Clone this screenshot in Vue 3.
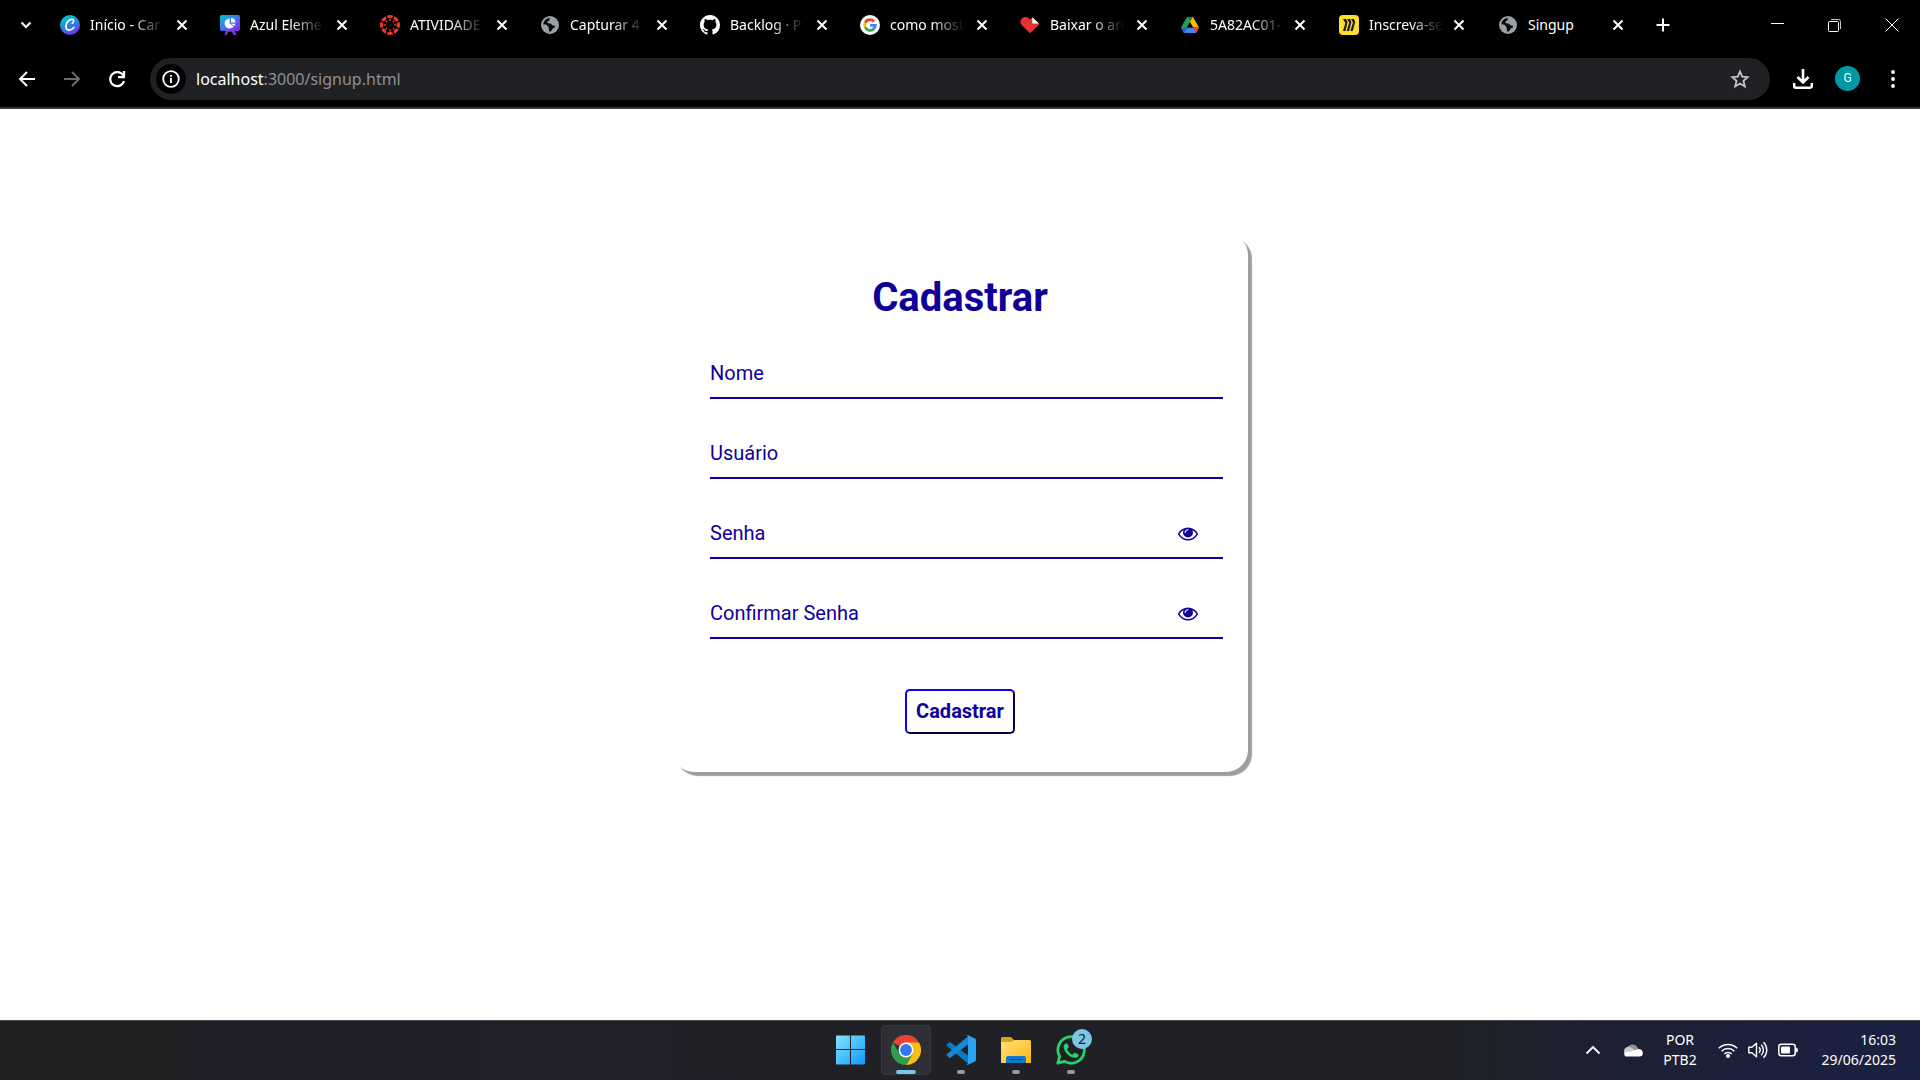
<script setup>
import { reactive } from 'vue'

const tabs = [
  { icon: 'canva', title: 'Início - Car' },
  { icon: 'slides', title: 'Azul Eleme' },
  { icon: 'canvas', title: 'ATIVIDADE' },
  { icon: 'globe', title: 'Capturar 4' },
  { icon: 'github', title: 'Backlog · P' },
  { icon: 'google', title: 'como most' },
  { icon: 'heart', title: 'Baixar o arq' },
  { icon: 'drive', title: '5A82AC01-' },
  { icon: 'miro', title: 'Inscreva-se' },
  { icon: 'globe', title: 'Singup' },
]

const fields = reactive([
  { id: 'nome', label: 'Nome', secret: false, visible: true, value: '' },
  { id: 'usuario', label: 'Usuário', secret: false, visible: true, value: '' },
  { id: 'senha', label: 'Senha', secret: true, visible: false, value: '' },
  { id: 'confirmar', label: 'Confirmar Senha', secret: true, visible: false, value: '' },
])
</script>

<template>
  <div class="screen">
    <header class="browser">
      <div class="strip">
        <button class="tool" aria-label="Pesquisar guias">
          <svg width="20" height="20" viewBox="0 0 20 20"><path d="M5.500 7.500l4.500 4.500 4.500-4.500" fill="none" stroke="#fff" stroke-width="2.200" /></svg>
        </button>
        <div class="tabs">
          <div v-for="(tab, i) in tabs" :key="i" class="tab">
            <svg v-if="tab.icon === 'canva'" class="favicon" viewBox="0 0 20 20">
              <defs>
                <linearGradient id="canvaFill" x1="0.2" y1="0" x2="0.7" y2="1"><stop offset="0.1" stop-color="#00c4cc" /><stop offset="0.55" stop-color="#2d7fe0" /><stop offset="1" stop-color="#7d2ae8" /></linearGradient>
              </defs>
              <circle cx="10" cy="10" r="10" fill="url(#canvaFill)" />
              <path d="M12.300 8.200c1.300-.4 2-3.200.3-3.800C9.600 3.600 5.800 7.600 5.900 11.600c.1 4.400 4.800 4.900 7.900.8" fill="none" stroke="#fff" stroke-width="1.700" stroke-linecap="round" />
            </svg>
            <svg v-else-if="tab.icon === 'slides'" class="favicon" viewBox="0 0 20 20">
              <defs>
                <linearGradient id="slideFill" x1="0" y1="0" x2="0.7" y2="1"><stop offset="0.05" stop-color="#00c4cc" /><stop offset="0.55" stop-color="#4a6cf0" /><stop offset="1" stop-color="#8b1fe0" /></linearGradient>
              </defs>
              <path d="M2 0h16a2 2 0 0 1 2 2v12a2 2 0 0 1-2 2h-3l1.500 4h-3.200L12 16.800H8L6.700 20H4.500L6 16H2a2 2 0 0 1-2-2V2a2 2 0 0 1 2-2z" fill="url(#slideFill)" />
              <path d="M9.600 3.500v5l4 3A5 5 0 1 1 9.600 3.500z" fill="#fff" /><path d="M11 2.700a4.700 4.700 0 0 1 4.600 4.800H11z" fill="#fff" /><path d="M11 8.700h4.400a5 5 0 0 1-1.200 2.300z" fill="#fff" />
            </svg>
            <svg v-else-if="tab.icon === 'canvas'" class="favicon" viewBox="0 0 20 20">
              <g v-for="a in 8" :key="a" :transform="`rotate(${a * 45} 10 10)`" fill="#e53a2b">
                <path d="M7 .5a10 10 0 0 1 6 0A3 3 0 0 1 7 .5z" /><circle cx="10" cy="5" r="0.900" />
              </g>
            </svg>
            <svg v-else-if="tab.icon === 'globe'" class="favicon" viewBox="0 0 20 20">
              <circle cx="10" cy="10" r="9" fill="#9aa0a6" />
              <path d="M10.500 2.900c-1 .5-1.400 1.400-1 2.200.2.500-.8.900-1.500 1.100-.8.300-.8 1.300-.3 1.900.6.700 2.200.2 3 .5 1.100.4.800 1.700 2 1.900.8.200 2-.1 2.300.7.300.9-.7 1.800-1.700 2-1 .3-1.200 1.700-2.100 2.700-.5.500-1.500.8-2.300.7l.1-2c-.2-.8-1.400-.8-1.700-1.700-.3-.8.300-1.400.1-2-.4-1-2.200-1.500-4.200-1.300A7 7 0 0 1 10.500 2.900z" fill="#08090a" />
              <path d="M3.500 9.600c1.500-.1 4.200 1.600 5.200 2.500v3.600c-2.700-.6-5-3-5.200-6.100z" fill="#9aa0a6" />
              <path d="M12 5.500c1-.3 1.200-1.300 1.600-1.800 1.600 1 2.700 2.700 3 4.600-1.200-.2-2.200.2-3-.5-.6-.6-1.900-.9-1.600-2.300z" fill="#9aa0a6" />
            </svg>
            <svg v-else-if="tab.icon === 'github'" class="favicon" viewBox="0 0 16 16">
              <path fill="#fff" d="M8 0C3.580 0 0 3.580 0 8c0 3.540 2.290 6.530 5.470 7.590.4.070.55-.17.55-.38 0-.19-.01-.82-.01-1.490-2.010.37-2.530-.49-2.690-.94-.09-.23-.48-.94-.82-1.130-.28-.15-.68-.52-.01-.53.63-.01 1.080.58 1.230.82.72 1.210 1.870.87 2.330.66.07-.52.28-.87.51-1.070-1.780-.2-3.640-.89-3.640-3.950 0-.87.31-1.590.82-2.150-.08-.2-.36-1.020.08-2.120 0 0 .67-.21 2.200.82.64-.18 1.320-.27 2-.27s1.360.09 2 .27c1.530-1.040 2.200-.82 2.200-.82.44 1.100.16 1.920.08 2.120.51.56.82 1.270.82 2.150 0 3.070-1.870 3.750-3.650 3.950.29.25.54.73.54 1.480 0 1.070-.01 1.930-.01 2.200 0 .21.15.46.55.38A8.010 8.010 0 0 0 16 8c0-4.420-3.580-8-8-8z" />
            </svg>
            <svg v-else-if="tab.icon === 'google'" class="favicon" viewBox="0 0 20 20">
              <circle cx="10" cy="10" r="10" fill="#fff" />
              <g fill="none" stroke-width="2.800">
                <path d="M5.300 7.600A5.200 5.200 0 0 1 14 6.600" stroke="#ea4335" /><path d="M5.300 12.400a5.200 5.200 0 0 1 0-4.900" stroke="#fbbc05" />
                <path d="M13.400 14.100a5.200 5.200 0 0 1-8.200-1.800" stroke="#34a853" /><path d="M10.200 10.400h5.200a5.200 5.200 0 0 1-2.100 3.900" stroke="#4285f4" />
              </g>
            </svg>
            <svg v-else-if="tab.icon === 'heart'" class="favicon" viewBox="0 0 20 20">
              <path d="M10 18.300L1.800 10.200C-1 6.800 1 2 5.200 1.900c2.200 0 3.900 1.100 4.800 2.700.5-.9 1.300-1.500 2.300-1.900l7 6.300q-.3.600-.9 1.200z" fill="#e5322d" />
              <path d="M12.300 2.200l6.700 6.300h-6.700z" fill="#fff" />
            </svg>
            <svg v-else-if="tab.icon === 'drive'" class="favicon" viewBox="0 0 20 20">
              <path d="M7 2h6L4 18 1 12.500z" fill="#22a04c" /><path d="M7 2h6l6 10.500h-6z" fill="#fbbc04" />
              <path d="M7.200 2h5.600L10 7z" fill="#188038" /><path d="M4 18l3-5.500h12L16 18z" fill="#4285f4" /><path d="M1 12.500h6L4 18z" fill="#1967d2" /><path d="M13 12.500h6L16 18z" fill="#ea4335" />
              <path d="M10 7.200l3.100 5.300H6.900z" fill="#000" />
            </svg>
            <svg v-else class="favicon" viewBox="0 0 20 20">
              <rect width="20" height="20" rx="4" fill="#ffdd33" />
              <path d="M4 4h3l1.600 3L6.500 16H4l2.300-8zM8 4h3l1.400 3L10 16H7.700l2.500-8.500zM12 4h3l1.200 3L13.700 16h-2.400l2.600-8.500z" fill="#1c1c1e" />
            </svg>
            <span class="title">{{ tab.title }}</span>
            <button class="close" :aria-label="'Fechar ' + tab.title">
              <svg width="12" height="12" viewBox="0 0 12 12"><path d="M1.500 1.500l9 9m0-9l-9 9" stroke="#fff" stroke-width="2" /></svg>
            </button>
          </div>
          <button class="new" aria-label="Nova guia">
            <svg width="14" height="14" viewBox="0 0 14 14"><path d="M7 .5v13M.5 7h13" stroke="#fff" stroke-width="2" /></svg>
          </button>
        </div>
        <div class="window">
          <button aria-label="Minimizar"><svg width="14" height="14" viewBox="0 0 14 14"><path d="M0 5.500h13" stroke="#fff" /></svg></button>
          <button aria-label="Restaurar"><svg width="14" height="14" viewBox="0 0 14 14"><rect x="0.500" y="3.500" width="10" height="10" rx="1" fill="none" stroke="#fff" /><path d="M3 1.500h7.500a2 2 0 0 1 2 2V11" fill="none" stroke="#ccc" /></svg></button>
          <button aria-label="Fechar"><svg width="14" height="14" viewBox="0 0 14 14"><path d="M.5.500l13 13m0-13l-13 13" stroke="#fff" /></svg></button>
        </div>
      </div>

      <div class="toolbar">
        <button class="tool" aria-label="Voltar"><svg width="18" height="18" viewBox="0 0 18 18"><path d="M17 9H2.500M9 2L2 9l7 7" fill="none" stroke="#fff" stroke-width="2" /></svg></button>
        <button class="tool" aria-label="Avançar"><svg width="18" height="18" viewBox="0 0 18 18"><path d="M1 9h14.500M9 2l7 7-7 7" fill="none" stroke="#6b6b6b" stroke-width="2" /></svg></button>
        <button class="tool" aria-label="Recarregar"><svg width="18" height="18" viewBox="0 0 18 18"><path d="M15.200 5.500A7 7 0 1 0 16 11" fill="none" stroke="#fff" stroke-width="2.200" /><path d="M10 7.200h6V1" fill="none" stroke="#fff" stroke-width="2.200" /></svg></button>
        <div class="omnibox">
          <button class="info" aria-label="Informações do site"><svg width="18" height="18" viewBox="0 0 18 18"><circle cx="9" cy="9" r="7.800" fill="none" stroke="#fff" stroke-width="1.800" /><path d="M9 8v5M9 5v1.800" stroke="#fff" stroke-width="1.900" /></svg></button>
          <span class="url"><b>localhost</b>:3000/signup.html</span>
          <button class="star" aria-label="Adicionar aos favoritos"><svg width="20" height="20" viewBox="0 0 20 20"><path d="M10 2.500l2.200 5.200 5.500.5-4.200 3.700 1.300 5.500L10 14.500l-4.800 2.900 1.300-5.500-4.200-3.700 5.500-.5z" fill="none" stroke="#c7c7c7" stroke-width="1.800" /></svg></button>
        </div>
        <button class="tool" aria-label="Downloads"><svg width="20" height="20" viewBox="0 0 20 20"><path d="M10 0v13M4.500 8l5.500 5.500L15.500 8" fill="none" stroke="#fff" stroke-width="2.600" /><path d="M1.200 14v3.200a1.500 1.500 0 0 0 1.500 1.500h14.600a1.500 1.500 0 0 0 1.500-1.500V14" fill="none" stroke="#fff" stroke-width="2.400" /></svg></button>
        <button class="tool" aria-label="Perfil"><span class="avatar">G</span></button>
        <button class="tool" aria-label="Menu"><svg width="18" height="18" viewBox="0 0 18 18" fill="#fff"><circle cx="9" cy="2" r="1.900" /><circle cx="9" cy="9" r="1.900" /><circle cx="9" cy="16" r="1.900" /></svg></button>
      </div>
    </header>

    <main class="page">
      <form class="card" @submit.prevent>
        <h1>Cadastrar</h1>
        <div v-for="field in fields" :key="field.id" class="field">
          <input :id="field.id" v-model="field.value" :type="field.visible ? 'text' : 'password'" />
          <label v-show="!field.value" :for="field.id">{{ field.label }}</label>
          <button v-if="field.secret" type="button" class="eye" :aria-label="'Mostrar ' + field.label" @click="field.visible = !field.visible">
            <svg width="20" height="20" viewBox="0 64 1792 1792"><path fill="currentColor" d="M1664 960q-152-236-381-353 61 104 61 225 0 185-131.500 316.500t-316.500 131.500-316.500-131.500-131.500-316.500q0-121 61-225-229 117-381 353 133 205 333.500 326.500t434.500 121.500 434.500-121.500 333.500-326.500zm-720-384q0-20-14-34t-34-14q-125 0-214.500 89.500t-89.500 214.500q0 20 14 34t34 14 34-14 14-34q0-86 61-147t147-61q20 0 34-14t14-34zm848 384q0 34-20 69-140 230-376.500 368.500t-499.500 138.500-499.500-139-376.500-368q-20-35-20-69t20-69q140-229 376.500-368t499.500-139 499.500 139 376.500 368q20 35 20 69z" /></svg>
          </button>
        </div>
        <button class="submit">Cadastrar</button>
      </form>
    </main>

    <footer class="taskbar">
      <nav class="apps">
        <button aria-label="Iniciar">
          <svg width="30" height="30" viewBox="0 0 30 30">
            <defs><linearGradient id="winFill" x1="0" y1="0" x2="30" y2="30" gradientUnits="userSpaceOnUse"><stop offset="0" stop-color="#8be3ff" /><stop offset="0.5" stop-color="#45c0fb" /><stop offset="1" stop-color="#0f92f5" /></linearGradient></defs>
            <path d="M1 .5H14V14H0V1.500a1 1 0 0 1 1-1zM15 .5h13a1 1 0 0 1 1 1V14H15zM0 15H14v14.500H1a1 1 0 0 1-1-1zM15 15h14v13.500a1 1 0 0 1-1 1H15z" fill="url(#winFill)" />
          </svg>
        </button>
        <button class="active" aria-label="Google Chrome">
          <svg width="30" height="30" viewBox="0 0 30 30">
            <path d="M15 15L2 7.500A15 15 0 0 1 28 7.500z" fill="#ea4335" /><path d="M15 7.500h13A15 15 0 0 1 15 30l6.500-11z" fill="#fbbc15" /><path d="M2 7.500l6.500 11.300L21.500 19 15 30A15 15 0 0 1 2 7.500z" fill="#2f9e4f" />
            <circle cx="15" cy="15" r="7.500" fill="#fff" /><circle cx="15" cy="15" r="5.900" fill="#3079ee" />
          </svg>
          <i></i>
        </button>
        <button aria-label="Visual Studio Code">
          <svg width="30" height="30" viewBox="0 0 30 30">
            <path d="M1 9.200L3 7.400q.8-.6 1.700 0L23 21.300V29.500L1 11q-.8-.9 0-1.800z" fill="#0f78c2" /><path d="M1 20.800l2 1.800q.8.600 1.700 0L23 8.700V.5L1 19q-.8.900 0 1.800z" fill="#1688d4" />
            <path d="M22 .2l7 3.300q1 .5 1 1.700v19.600q0 1.200-1 1.700l-7 3.300q-1.200.5-2-.5 2 .8 2-1.300V2q0-2.100-2-1.300 1-1 2-.5z" fill="#2aa3f2" />
          </svg>
          <i></i>
        </button>
        <button aria-label="Explorador de Arquivos">
          <svg width="30" height="30" viewBox="0 0 30 30">
            <defs><linearGradient id="folderFill" x1="0" y1="0" x2="1" y2="1"><stop offset="0" stop-color="#ffe07a" /><stop offset="1" stop-color="#fdb813" /></linearGradient></defs>
            <path d="M0 3.500A1.500 1.500 0 0 1 1.500 2H10l3 3v3H0z" fill="#e0a010" /><path d="M0 7h10.500l3-2h15A1.500 1.500 0 0 1 30 6.500V28H0z" fill="url(#folderFill)" />
            <path d="M5 28v-5a2 2 0 0 1 2-2h16a2 2 0 0 1 2 2v5z" fill="#1179cc" /><path d="M8.500 24.500h13" stroke="#0a4f90" />
          </svg>
          <i></i>
        </button>
        <button aria-label="WhatsApp">
          <svg width="30" height="30" viewBox="0 0 30 30">
            <path d="M1.800 28.200l1.900-6.700A13.200 13.200 0 1 1 8.600 26.400z" fill="none" stroke="#25d366" stroke-width="2.800" stroke-linejoin="round" />
            <path transform="translate(5.500 5.500) scale(.82)" d="M6.620 10.790c1.440 2.830 3.760 5.140 6.590 6.590l2.200-2.200c.27-.27.67-.36 1.020-.24l3.700 1.700c.55.200.9.700.8 1.300-.4 2.400-2.500 3.200-4.500 3.100C9.500 20.500 3 13.800 2.700 7.500c0-2 1.100-4 3.300-4.200.7 0 1 .3 1.300.9l1.500 3.370c.11.350.03.740-.25 1.020z" fill="#25d366" />
          </svg>
          <i></i><span class="badge">2</span>
        </button>
      </nav>
      <div class="tray">
        <button class="up" aria-label="Ícones ocultos"><svg width="16" height="10" viewBox="0 0 16 10"><path d="M1.500 8.500L8 2l6.500 6.500" fill="none" stroke="#fff" stroke-width="1.800" /></svg></button>
        <svg width="20" height="14" viewBox="0 0 20 14"><path d="M4 9a5.500 5.500 0 0 1 11-3.500l1.500 4z" fill="#8d9096" /><path d="M1 8.500A4.500 4.500 0 0 1 8 4.500l9 6-14 2z" fill="#c9cacd" /><path d="M2.500 13.500A3 3 0 0 1 2 9l6-.500 6.500-2.300a4 4 0 0 1 5.300 4.200q0 3-3.300 3.100z" fill="#fff" /></svg>
        <div class="lang">POR<br />PTB2</div>
        <div class="status">
          <svg width="20" height="16" viewBox="0 0 20 16"><g fill="none" stroke="#fff" stroke-width="1.500"><path d="M.8 6.300a13 13 0 0 1 18.400 0" /><path d="M3.600 9.200a9 9 0 0 1 12.800 0" /><path d="M6.300 12a5.200 5.200 0 0 1 7.400 0" /></g><circle cx="10" cy="14" r="2" fill="#fff" /></svg>
          <svg width="20" height="18" viewBox="0 0 20 18"><g fill="none" stroke="#fff" stroke-width="1.400"><path d="M.8 6.300v5.400h3l4.700 4V2.300l-4.700 4z" stroke-linejoin="round" /><path d="M11 6.300a4 4 0 0 1 0 5.400M13.200 3.700a7.500 7.500 0 0 1 0 10.600M15.500 1.200a11 11 0 0 1 0 15.600" /></g></svg>
          <svg width="20" height="14" viewBox="0 0 20 14"><rect x="0.800" y="1.200" width="16.400" height="11.600" rx="2.500" fill="none" stroke="#fff" stroke-width="1.500" /><rect x="3" y="3.500" width="9" height="7" rx="1" fill="#fff" /><path d="M18 4.500q2 0 2 2.500t-2 2.500z" fill="#fff" /></svg>
        </div>
        <div class="clock">16:03<br />29/06/2025</div>
      </div>
    </footer>
  </div>
</template>

<style>
body {
  margin: 0;
}
</style>

<style scoped>
.screen {
  --ink: #0f009a;
  min-height: 100vh;
  display: flex;
  flex-direction: column;
  background: #fff;
  font-family: "Noto Sans", "Open Sans", sans-serif;
}
button {
  padding: 0;
  border: 0;
  background: none;
  color: inherit;
  font: inherit;
}
svg {
  display: block;
  flex: none;
}
.browser {
  background: #000;
  color: #fff;
  border-bottom: 2px solid #3b3839;
}
.strip {
  display: flex;
  align-items: center;
  height: 50px;
  padding-left: 3px;
}
.tool {
  display: grid;
  place-items: center;
  flex: none;
  width: 45px;
  height: 40px;
}
.tabs {
  display: flex;
  flex: 1;
  min-width: 0;
  padding-left: 2px;
}
.tab {
  display: flex;
  align-items: center;
  box-sizing: border-box;
  width: 160px;
  min-width: 0;
  padding-left: 10px;
}
.tab:nth-child(n + 8) {
  width: 159px;
}
.favicon {
  width: 20px;
  height: 20px;
}
.title {
  width: 74px;
  margin: 0 12px 0 10px;
  overflow: hidden;
  white-space: nowrap;
  font-size: 14px;
  line-height: 20px;
  mask-image: linear-gradient(to right, #000 55%, transparent);
}
.tab:nth-child(n + 8) .title {
  margin-right: 10px;
}
.tab:nth-child(10) .title {
  mask-image: none;
}
.close,
.new {
  display: grid;
  place-items: center;
  height: 20px;
}
.new {
  width: 32px;
}
.window {
  display: flex;
}
.window button {
  display: grid;
  place-items: center;
  width: 57px;
  height: 40px;
}
.toolbar {
  display: flex;
  align-items: center;
  height: 57px;
  padding: 0 5px 0 4px;
}
.omnibox {
  display: flex;
  flex: 1;
  align-items: center;
  height: 42px;
  margin: 0 10px 0 11px;
  border-radius: 21px;
  background: #202124;
}
.info {
  display: grid;
  place-items: center;
  width: 30px;
  height: 30px;
  margin-left: 6px;
  border-radius: 50%;
  background: #000;
}
.url {
  flex: 1;
  margin-left: 10px;
  color: #8f9094;
  font-size: 16px;
}
.url b {
  color: #fff;
  font-weight: 400;
}
.star {
  margin-right: 20px;
}
.avatar {
  width: 25px;
  height: 25px;
  border-radius: 50%;
  background: #0097a7;
  font-family: Roboto, sans-serif;
  font-size: 12px;
  line-height: 25px;
  text-align: center;
}
.page {
  flex: 1;
  font-family: Roboto, sans-serif;
  color: var(--ink);
}
.card {
  display: flex;
  flex-direction: column;
  box-sizing: border-box;
  width: 30%;
  margin: 124px auto 0;
  padding: 41px 25px 38px 38px;
  border-radius: 22px;
  box-shadow: 4px 4px 1px #9e9e9e;
  background: #fff;
}
h1 {
  margin: 0 13px 31px 0;
  font-size: 40px;
  line-height: 48px;
  text-align: center;
}
.field {
  display: grid;
  align-items: center;
  height: 46px;
  margin-bottom: 34px;
  border-bottom: 2px solid var(--ink);
  box-sizing: border-box;
}
.field > * {
  grid-area: 1 / 1;
}
.field input {
  width: 100%;
  height: 40px;
  padding: 0;
  border: 0;
  outline: 0;
  background: none;
  color: var(--ink);
  font: 20px Roboto, sans-serif;
}
.field label {
  justify-self: start;
  padding-bottom: 4px;
  font-size: 20px;
  line-height: 24px;
  pointer-events: none;
}
.eye {
  justify-self: end;
  margin: 0 25px 2px 0;
}
.submit {
  align-self: center;
  box-sizing: border-box;
  width: 110px;
  height: 45px;
  margin: 16px 13px 0 0;
  padding-bottom: 1px;
  border: 2px solid;
  border-color: #1400f0 #07004c #07004c #1400f0;
  border-radius: 5px;
  font-size: 20px;
  font-weight: 700;
}
.taskbar {
  display: grid;
  grid-template-columns: 1fr auto 1fr;
  align-items: center;
  box-sizing: border-box;
  height: 60px;
  padding-bottom: 1px;
  border-top: 1px solid #45474b;
  background: linear-gradient(to right, #20201f 0, #20201f 8%, #20202a 11%, #20202a 25%, #202126 45%, #202126 75%, #1b2038 88%, #1a2142);
  color: #fff;
}
.apps {
  grid-column: 2;
  display: flex;
  gap: 5px;
  padding-left: 2px;
}
.apps button {
  position: relative;
  display: grid;
  place-items: center;
  width: 50px;
  height: 50px;
  border-radius: 5px;
}
.apps .active {
  background: #2e2f34;
  box-shadow: inset 0 0 0 1px #37383c;
}
.apps i {
  position: absolute;
  bottom: 1px;
  left: 21px;
  width: 8px;
  height: 4px;
  border-radius: 2px;
  background: #9a9a9d;
}
.apps .active i {
  left: 15px;
  width: 20px;
  background: #7cc5e6;
}
.badge {
  position: absolute;
  top: 4px;
  right: 4px;
  width: 20px;
  height: 20px;
  border-radius: 50%;
  background: #7cc5e6;
  color: #10212b;
  font-size: 14px;
  line-height: 20px;
}
.tray {
  display: flex;
  align-items: center;
  justify-content: flex-end;
  padding-right: 24px;
  font-size: 14px;
  line-height: 20px;
}
.up {
  margin-right: 22px;
}
.lang {
  width: 34px;
  margin: 0 21px 0 20px;
  text-align: center;
}
.status {
  display: flex;
  align-items: center;
  gap: 10px;
}
.clock {
  width: 78px;
  margin-left: 20px;
  text-align: right;
}
</style>
